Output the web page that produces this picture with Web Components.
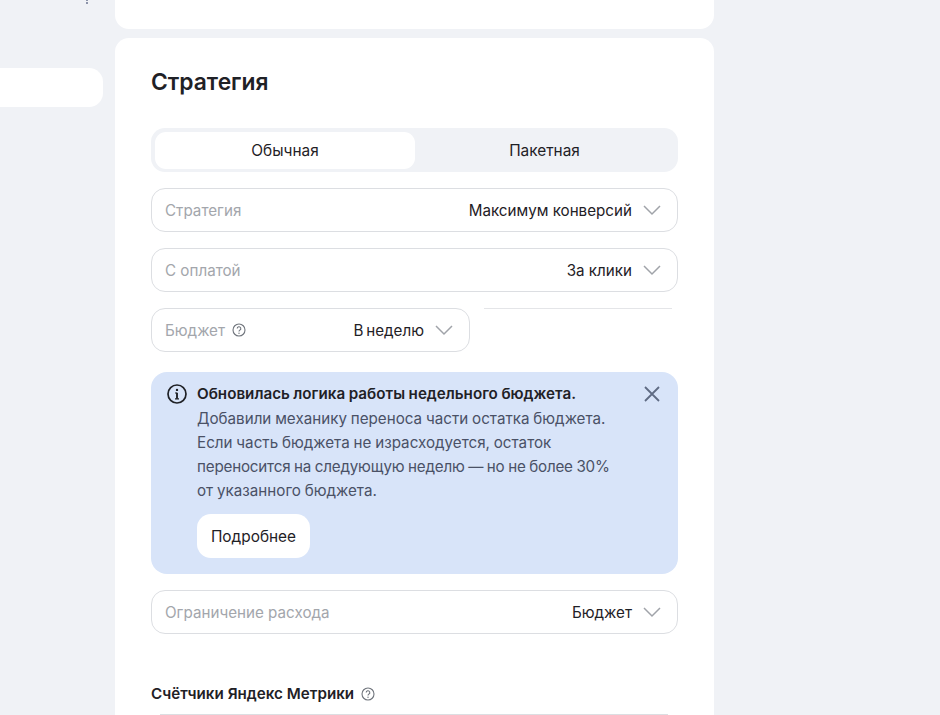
<!DOCTYPE html>
<html lang="ru">
<head>
<meta charset="utf-8">
<title>Стратегия</title>
<style>
  html, body { margin: 0; height: 715px; overflow: hidden; background: #f0f2f6; }
  body { font-family: Inter, "Noto Sans", "Liberation Sans", sans-serif; color: #1f2126; }
</style>
</head>
<body>
<app-page>
  <side-bar slot="side"></side-bar>
  <top-card slot="main"></top-card>
  <strategy-card slot="main"></strategy-card>
</app-page>

<script>
const CHEVRON = `<svg width="20" height="12" viewBox="0 0 20 12" fill="none"><path d="M2 2l8 8 8-8" stroke="#a0a3a9" stroke-width="1.5"/></svg>`;
const HELP = `<svg width="14" height="14" viewBox="0 0 14 14" fill="none"><circle cx="7" cy="7" r="6" stroke="#6f747c" stroke-width="1.1"/><path d="M5.2 5.6a1.8 1.8 0 1 1 2.7 1.5c-.6.4-.9.7-.9 1.4" stroke="#6f747c" stroke-width="1.1"/><circle cx="7" cy="10.2" r=".7" fill="#6f747c"/></svg>`;

class AppPage extends HTMLElement {
  constructor() {
    super();
    this.attachShadow({ mode: "open" }).innerHTML = `
      <style>
        :host { display: grid; grid-template-columns: 115px 599px; height: 715px; overflow: hidden; }
        .main { display: flex; flex-direction: column; gap: 9px; }
      </style>
      <div><slot name="side"></slot></div>
      <div class="main"><slot name="main"></slot></div>
    `;
  }
}

class SideBar extends HTMLElement {
  constructor() {
    super();
    this.attachShadow({ mode: "open" }).innerHTML = `
      <style>
        :host { display: block; }
        .dots { display: flex; flex-direction: column; gap: 1px; height: 68px; box-sizing: border-box; padding-left: 86px; }
        .dots i { width: 2px; height: 2px; border-radius: 50%; background: #6c7590; }
        .dots i:first-child { height: 1px; }
        .item { width: 103px; height: 39px; background: #fff; border-radius: 0 14px 14px 0; }
      </style>
      <div class="dots"><i></i><i></i></div>
      <div class="item"></div>
    `;
  }
}

class TopCard extends HTMLElement {
  constructor() {
    super();
    this.attachShadow({ mode: "open" }).innerHTML = `
      <style>
        :host { display: block; height: 29px; background: #fff; border-radius: 0 0 14px 14px; }
      </style>
    `;
  }
}

class SegTabs extends HTMLElement {
  constructor() {
    super();
    this.attachShadow({ mode: "open" }).innerHTML = `
      <style>
        :host { display: grid; grid-template-columns: 260px 1fr; height: 44px; box-sizing: border-box; padding: 4px; background: #f0f2f6; border-radius: 14px; font-size: 15.4px; line-height: 37px; text-align: center; color: #1f2126; }
        .on { background: #fff; border-radius: 11px; }
      </style>
      <div class="on">Обычная</div>
      <div>Пакетная</div>
    `;
  }
}

class SelectField extends HTMLElement {
  constructor() {
    super();
    const help = this.hasAttribute("help") ? HELP : "";
    this.attachShadow({ mode: "open" }).innerHTML = `
      <style>
        :host { display: flex; align-items: center; height: 44px; box-sizing: border-box; padding: 0 15px 0 13px; border: 1px solid #dcdee2; border-radius: 14px; background: #fff; font-size: 15.2px; }
        .label { color: #a3a6ac; }
        .help { display: flex; margin-left: 7px; }
        .value { margin-left: auto; margin-right: 10px; color: #1f2126; }
        .chev { display: flex; }
      </style>
      <span class="label"><slot name="label"></slot></span>
      <span class="help">${help}</span>
      <span class="value"><slot name="value"></slot></span>
      <span class="chev">${CHEVRON}</span>
    `;
  }
}

class InfoBanner extends HTMLElement {
  constructor() {
    super();
    this.attachShadow({ mode: "open" }).innerHTML = `
      <style>
        :host { display: grid; grid-template-columns: 20px 1fr 16px; column-gap: 10px; height: 202px; box-sizing: border-box; padding: 10px 18px 16px 16px; background: #d8e4f9; border-radius: 16px; font-size: 15.2px; line-height: 24px; color: #4a5166; }
        svg { display: block; }
        .icon { padding-top: 2px; }
        .close { padding-top: 4px; }
        b { display: block; margin-bottom: 1px; font-weight: 600; word-spacing: -.3px; color: #1f2126; }
        .text { white-space: nowrap; word-spacing: -.45px; }
        button { display: block; margin-top: 11px; width: 113px; height: 44px; padding: 1px 0 0; border: 0; border-radius: 14px; background: #fff; font: inherit; font-size: 15.4px; word-spacing: 0; color: #1f2126; }
      </style>
      <div class="icon">
        <svg width="20" height="20" viewBox="0 0 20 20" fill="none">
          <circle cx="10" cy="10" r="9" stroke="#1f2126" stroke-width="1.7"/>
          <circle cx="10" cy="5.9" r="1.2" fill="#1f2126"/>
          <path d="M10 8.7v6" stroke="#1f2126" stroke-width="1.9"/>
          <path d="M8 9h2M8 14.8h4" stroke="#1f2126" stroke-width="1.2"/>
        </svg>
      </div>
      <div class="text">
        <b><slot name="title"></slot></b>
        <slot></slot>
        <button>Подробнее</button>
      </div>
      <div class="close">
        <svg width="16" height="16" viewBox="0 0 16 16" fill="none"><path d="M1 1l14 14M15 1L1 15" stroke="#5f6b84" stroke-width="1.8"/></svg>
      </div>
    `;
  }
}

class StrategyCard extends HTMLElement {
  constructor() {
    super();
    this.attachShadow({ mode: "open" }).innerHTML = `
      <style>
        :host { display: block; height: 700px; box-sizing: border-box; padding: 29px 36px 0; background: #fff; border-radius: 14px; }
        h2 { margin: 0 0 32px; font-size: 22.8px; line-height: 29px; font-weight: 600; color: #1f2126; }
        .stack { display: flex; flex-direction: column; gap: 16px; }
        .row { display: grid; grid-template-columns: 319px 1fr; column-gap: 14px; margin-bottom: 4px; }
        .ghost { height: 44px; box-sizing: border-box; margin-right: 6px; border-top: 1px solid #e4e5e8; }
        .tight { word-spacing: -1.5px; }
        .squeeze { letter-spacing: -.2px; }
        h3 { display: flex; align-items: center; gap: 7px; margin: 48px 0 0; font-size: 15.2px; line-height: 24px; font-weight: 600; color: #1f2126; }
        .help { display: flex; }
        .cut { margin: 8px 10px 0 9px; border-top: 1px solid #dcdee2; }
      </style>
      <h2>Стратегия</h2>
      <div class="stack">
        <seg-tabs></seg-tabs>
        <select-field><span slot="label">Стратегия</span><span slot="value">Максимум конверсий</span></select-field>
        <select-field><span slot="label">С оплатой</span><span slot="value">За клики</span></select-field>
        <div class="row">
          <select-field help><span slot="label">Бюджет</span><span slot="value" class="tight">В неделю</span></select-field>
          <div class="ghost"></div>
        </div>
        <info-banner>
          <span slot="title">Обновилась логика работы недельного бюджета.</span>
          Добавили механику переноса части остатка бюджета.<br>
          Если часть бюджета не израсходуется, остаток<br>
          <span class="squeeze">переносится на следующую неделю — но не более 30%</span><br>
          от указанного бюджета.
        </info-banner>
        <select-field><span slot="label">Ограничение расхода</span><span slot="value">Бюджет</span></select-field>
      </div>
      <h3>Счётчики Яндекс Метрики <span class="help">${HELP}</span></h3>
      <div class="cut"></div>
    `;
  }
}

customElements.define("app-page", AppPage);
customElements.define("side-bar", SideBar);
customElements.define("top-card", TopCard);
customElements.define("seg-tabs", SegTabs);
customElements.define("select-field", SelectField);
customElements.define("info-banner", InfoBanner);
customElements.define("strategy-card", StrategyCard);
</script>
</body>
</html>
